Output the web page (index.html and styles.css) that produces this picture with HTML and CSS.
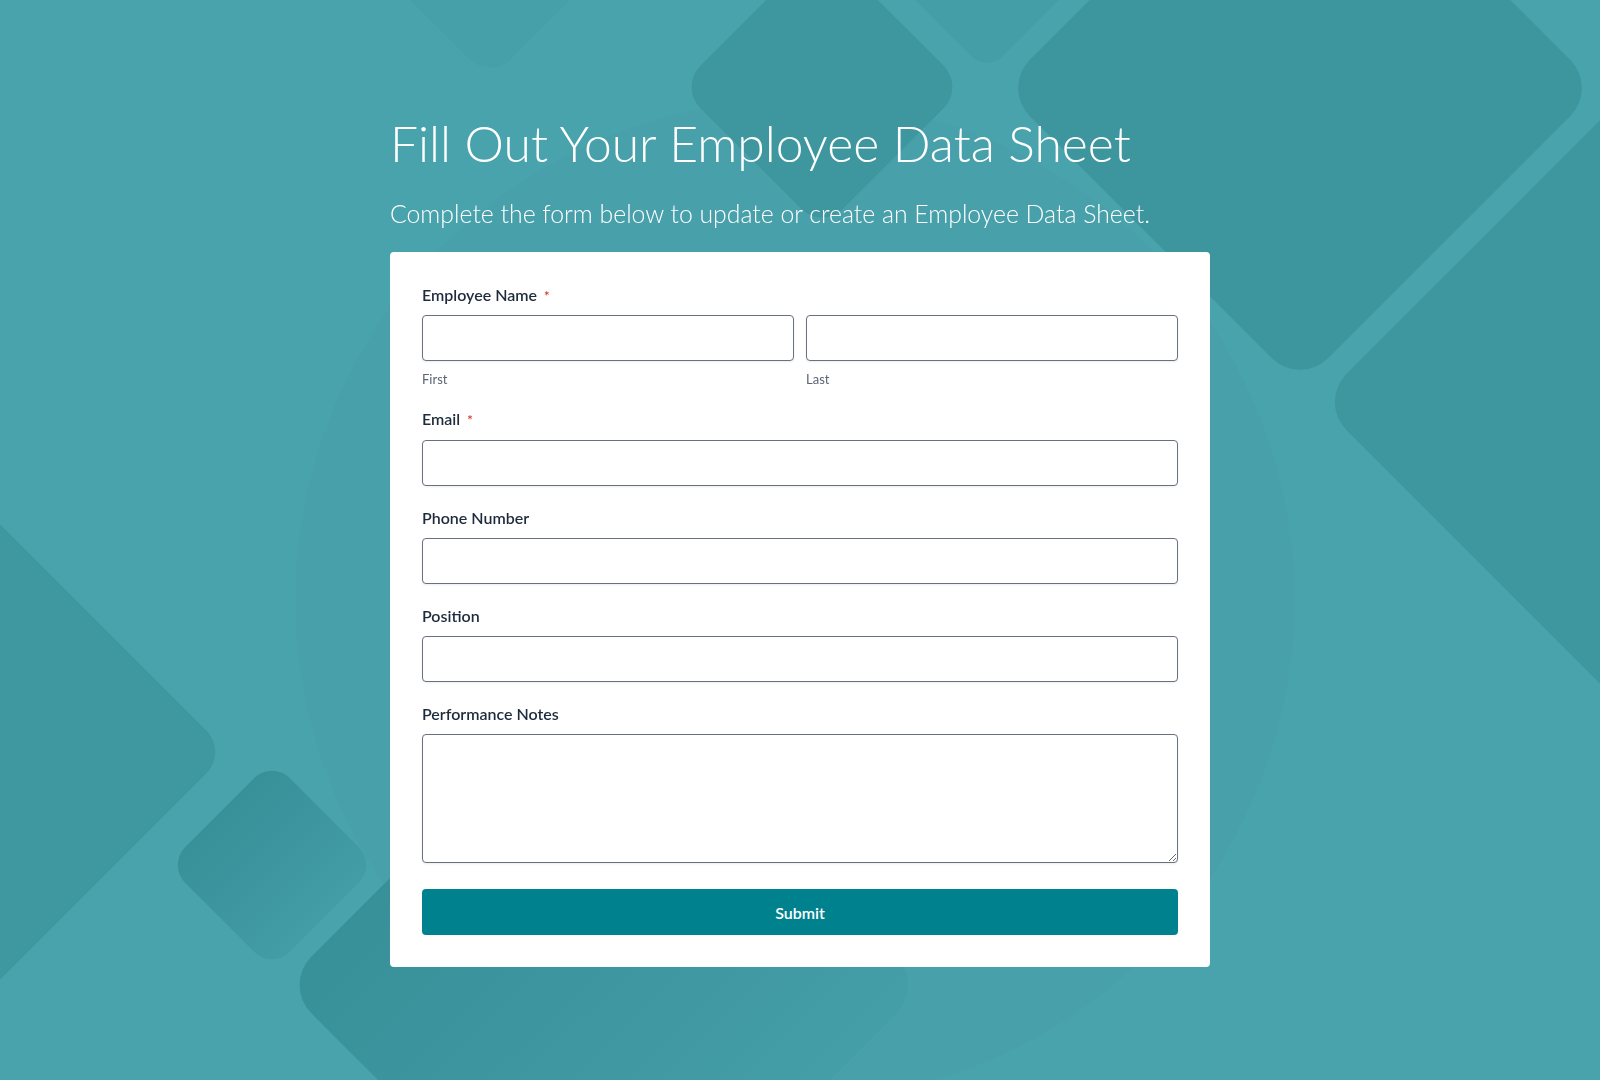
FILE: index.html
```html
<!DOCTYPE html>
<html lang="en">
<head>
<meta charset="utf-8">
<title>Employee Data Sheet</title>
<link rel="stylesheet" href="styles.css">
</head>
<body>
<div class="backdrop" aria-hidden="true">
  <svg viewBox="0 0 1600 1080" preserveAspectRatio="none" width="100%" height="100%">
    <defs>
      <linearGradient id="gSmall" x1="175" y1="0" x2="370" y2="0" gradientUnits="userSpaceOnUse">
        <stop offset="0" stop-color="#368e97"/>
        <stop offset="1" stop-color="#459fa8"/>
      </linearGradient>
      <linearGradient id="gBottom" x1="290" y1="0" x2="920" y2="0" gradientUnits="userSpaceOnUse">
        <stop offset="0" stop-color="#358d96"/>
        <stop offset="1" stop-color="#47a1aa"/>
      </linearGradient>
    </defs>
    <circle cx="795" cy="600" r="500" fill="#000" fill-opacity="0.01"/>
    <rect class="s1" x="363" y="-228" width="255" height="255" rx="30" transform="rotate(45 490 -101)"/>
    <rect class="s2" x="721" y="-14" width="202" height="202" rx="30" transform="rotate(45 822 87)"/>
    <rect class="s3" x="881" y="-184" width="212" height="212" rx="22" transform="rotate(45 987 -78)"/>
    <rect class="s4" x="1089" y="-123" width="422" height="422" rx="40" transform="rotate(45 1300 88)"/>
    <rect class="s5" x="1450" y="84" width="636" height="636" rx="40" transform="rotate(45 1768 402)"/>
    <rect class="s6" x="-540" y="434" width="636" height="636" rx="30" transform="rotate(45 -222 752)"/>
    <rect x="198" y="791" width="148" height="148" rx="25" transform="rotate(45 272 865)" fill="url(#gSmall)"/>
    <rect x="377" y="758" width="454" height="454" rx="40" transform="rotate(45 604 985)" fill="url(#gBottom)"/>
  </svg>
</div>

<main class="page">
  <h1 class="title">Fill Out Your Employee Data Sheet</h1>
  <p class="subtitle">Complete the form below to update or create an Employee Data Sheet.</p>

  <form class="card">
    <div class="field field-name">
      <label class="label">Employee Name <span class="req">*</span></label>
      <div class="name-row">
        <div class="name-col">
          <input class="input" type="text">
          <span class="sublabel">First</span>
        </div>
        <div class="name-col">
          <input class="input" type="text">
          <span class="sublabel">Last</span>
        </div>
      </div>
    </div>

    <div class="field">
      <label class="label">Email <span class="req">*</span></label>
      <input class="input" type="email">
    </div>

    <div class="field">
      <label class="label">Phone Number</label>
      <input class="input" type="tel">
    </div>

    <div class="field">
      <label class="label">Position</label>
      <input class="input" type="text">
    </div>

    <div class="field field-last">
      <label class="label">Performance Notes</label>
      <textarea class="input textarea"></textarea>
    </div>

    <button class="submit" type="button">Submit</button>
  </form>
</main>
</body>
</html>
```

FILE: styles.css
```css
* {
  box-sizing: border-box;
}

html, body {
  margin: 0;
  padding: 0;
}

body {
  min-height: 100vh;
  background: #49a3ad;
  font-family: Lato, "Open Sans", "Liberation Sans", sans-serif;
  overflow: hidden;
}

.backdrop {
  position: fixed;
  inset: 0;
  z-index: 0;
}

.backdrop svg {
  display: block;
}

.s1 { fill: #45a0a9; }
.s2 { fill: #3e969e; }
.s3 { fill: #449ea7; }
.s4 { fill: #3d959d; }
.s5 { fill: #3e969e; }
.s6 { fill: #3f979f; }

.page {
  position: relative;
  z-index: 1;
  width: 820px;
  margin: 0 auto;
  padding-top: 114px;
}

.title {
  margin: 0;
  font-weight: 300;
  font-size: 49.8px;
  line-height: 58px;
  color: #ffffff;
}

.subtitle {
  margin: 27px 0 0;
  font-weight: 300;
  font-size: 24.8px;
  line-height: 30px;
  color: #ffffff;
}

.card {
  margin-top: 23px;
  background: #ffffff;
  border-radius: 4px;
  padding: 33px 32px 32px;
  display: flex;
  flex-direction: column;
}

.field {
  display: flex;
  flex-direction: column;
  margin-bottom: 22px;
}

.field-last {
  margin-bottom: 26px;
}

.label {
  display: block;
  font-size: 16px;
  line-height: 20px;
  font-weight: 600;
  color: #1d2b3c;
  margin-bottom: 10px;
}

.field-name .label {
  margin-bottom: 9px;
}

.req {
  color: #d8342c;
  font-size: 13px;
  margin-left: 3px;
}

.name-row {
  display: grid;
  grid-template-columns: 1fr 1fr;
  column-gap: 12px;
}

.name-col {
  display: flex;
  flex-direction: column;
}

.sublabel {
  margin-top: 10px;
  font-size: 13px;
  line-height: 16px;
  color: #5b6573;
}

.input {
  display: block;
  width: 100%;
  height: 46px;
  margin: 0;
  padding: 8px 12px;
  border: 1px solid #69707e;
  border-radius: 4px;
  background: #ffffff;
  box-shadow: 0 1px 2px rgba(15, 23, 42, 0.08);
  font: inherit;
  font-size: 16px;
  outline: none;
}

.textarea {
  height: 129px;
  resize: vertical;
}

.submit {
  display: block;
  width: 100%;
  height: 46px;
  border: 0;
  border-radius: 4px;
  background: #00818e;
  color: #ffffff;
  font-family: inherit;
  font-size: 16px;
  font-weight: 600;
  cursor: pointer;
}
```
